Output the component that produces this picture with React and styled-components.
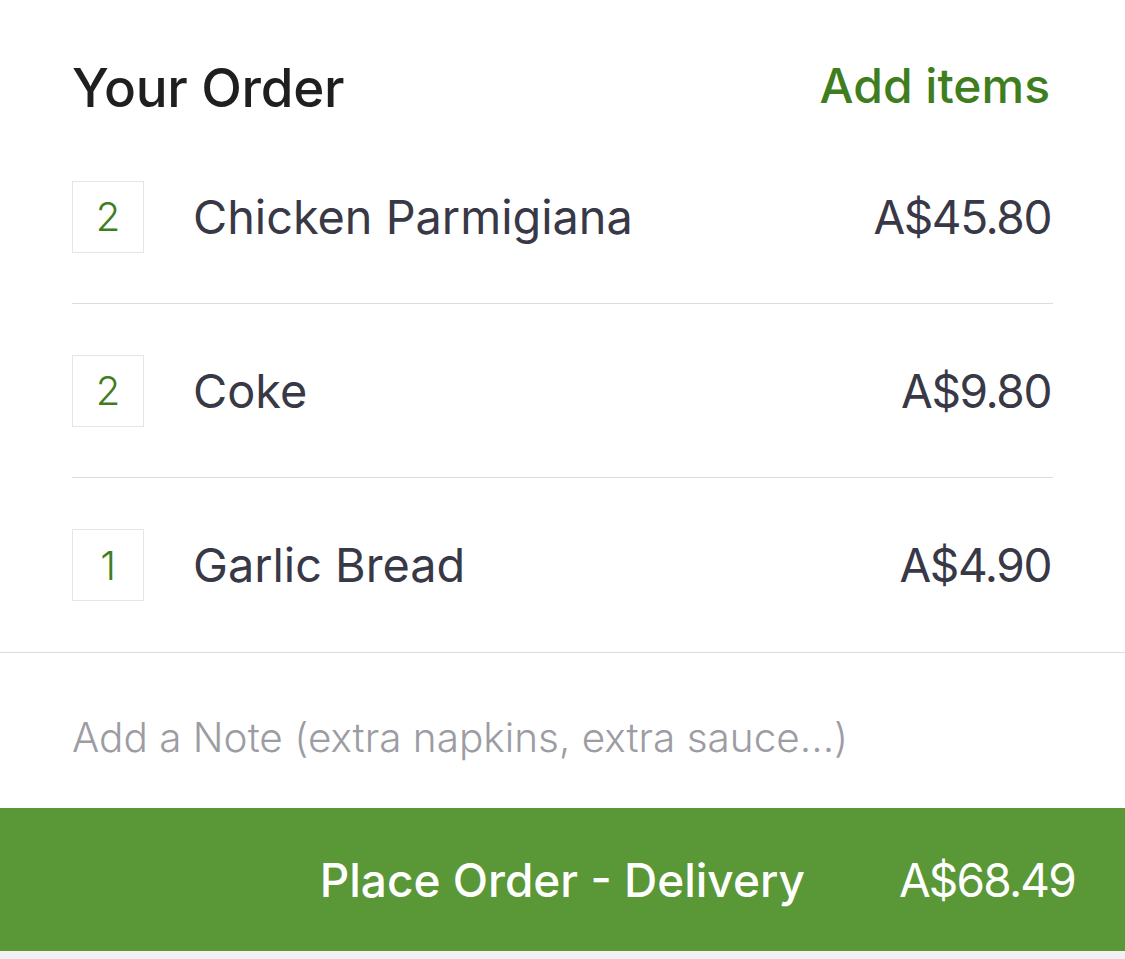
import React from 'react';
import styled, { createGlobalStyle } from 'styled-components';

const GlobalStyle = createGlobalStyle`
    html, body {
        margin: 0;
        padding: 0;
        background: #f1f1f4;
        font-family: Inter, "Open Sans", "Liberation Sans", sans-serif;
    }
`

const Page = styled.div`
    width: 1125px;
    height: 959px;
    background: #f1f1f4;
    display: flex;
    flex-direction: column;
`

const Sheet = styled.div`
    background: #ffffff;
    display: flex;
    flex-direction: column;
`

const Header = styled.div`
    display: flex;
    justify-content: space-between;
    align-items: center;
    padding: 58px 75px 0 72px;
    height: 60px;
`

const Title = styled.h1`
    margin: 0;
    font-size: 53px;
    font-weight: 500;
    color: #1f1f1f;
    letter-spacing: -0.3px;
`

const AddItems = styled.a`
    font-size: 48px;
    font-weight: 500;
    color: #3f7e1f;
    margin-top: -6px;
    cursor: pointer;
`

const Items = styled.div`
    padding: 0 72px;
    margin-top: 12px;
    display: flex;
    flex-direction: column;
`

const Row = styled.div`
    display: flex;
    align-items: center;
    height: 174px;
    box-sizing: border-box;
    border-bottom: ${({ $last }) => ($last ? 'none' : '1px solid #dcdcdc')};
`

const Qty = styled.div`
    width: 72px;
    height: 72px;
    box-sizing: border-box;
    border: 1px solid #e6e6e6;
    display: flex;
    align-items: center;
    justify-content: center;
    font-size: 40px;
    font-weight: 300;
    color: #3f7e1f;
    flex-shrink: 0;
`

const Name = styled.span`
    margin-left: 49px;
    flex: 1;
    font-size: 46.8px;
    color: #383846;
`

const Price = styled.span`
    font-size: 46px;
    color: #383846;
    letter-spacing: -1.4px;
    margin-right: 2px;
`

const Divider = styled.div`
    height: 1px;
    background: #dcdcdc;
`

const Note = styled.div`
    height: 155px;
    box-sizing: border-box;
    padding: 14px 0 0 72px;
    display: flex;
    align-items: center;
    font-size: 40.5px;
    font-weight: 300;
    color: #9c9ca3;
`

const PlaceButton = styled.button`
    height: 143px;
    border: none;
    background: #5a9737;
    color: #ffffff;
    font-family: inherit;
    display: flex;
    align-items: center;
    justify-content: flex-end;
    padding: 0 50px 0 0;
    gap: 94px;
    cursor: pointer;
`

const ButtonLabel = styled.span`
    font-size: 46px;
    font-weight: 500;
`

const ButtonPrice = styled.span`
    font-size: 46px;
    font-weight: 400;
    letter-spacing: -1.8px;
`

const items = [
    { qty: 2, name: 'Chicken Parmigiana', price: 'A$45.80' },
    { qty: 2, name: 'Coke', price: 'A$9.80' },
    { qty: 1, name: 'Garlic Bread', price: 'A$4.90' },
];

const App = () => {
    return (
        <Page>
            <GlobalStyle />
            <Sheet>
                <Header>
                    <Title>Your Order</Title>
                    <AddItems>Add items</AddItems>
                </Header>
                <Items>
                    {items.map((item, i) => (
                        <Row key={item.name} $last={i === items.length - 1}>
                            <Qty>{item.qty}</Qty>
                            <Name>{item.name}</Name>
                            <Price>{item.price}</Price>
                        </Row>
                    ))}
                </Items>
                <Divider />
                <Note>Add a Note (extra napkins, extra sauce...)</Note>
                <PlaceButton>
                    <ButtonLabel>Place Order - Delivery</ButtonLabel>
                    <ButtonPrice>A$68.49</ButtonPrice>
                </PlaceButton>
            </Sheet>
        </Page>
    )
}

export default App;
